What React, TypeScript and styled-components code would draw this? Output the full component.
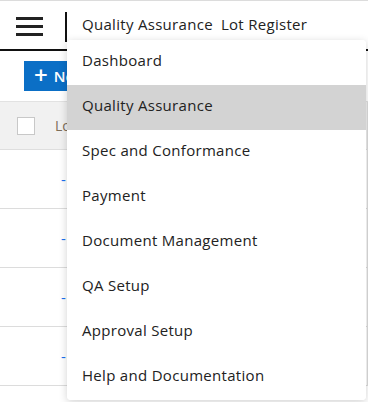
import styled, { createGlobalStyle } from 'styled-components'

const GlobalStyle = createGlobalStyle`
  html, body {
    margin: 0;
    padding: 0;
    background: #fff;
    font-family: 'Open Sans', 'DejaVu Sans', sans-serif;
    color: #222;
  }
`

const MENU_ITEMS = [
  'Dashboard',
  'Quality Assurance',
  'Spec and Conformance',
  'Payment',
  'Document Management',
  'QA Setup',
  'Approval Setup',
  'Help and Documentation',
]

const ROWS = [1, 2, 3, 4]

const App = () => {
  return (
    <Page>
      <GlobalStyle />
      <Header>
        <MenuButton aria-label="menu">
          <Bar />
          <Bar />
          <Bar />
        </MenuButton>
        <Divider />
        <Title>Quality Assurance</Title>
        <Title>Lot Register</Title>
      </Header>
      <Toolbar>
        <NewButton>
          <Plus>+</Plus> New
        </NewButton>
      </Toolbar>
      <Table>
        <HeadRow>
          <CheckCell>
            <Checkbox />
          </CheckCell>
          <LotCell $head>Lot Number</LotCell>
          <RestCell />
          <LastCell />
        </HeadRow>
        {ROWS.map((row) => (
          <BodyRow key={row}>
            <CheckCell />
            <LotCell>
              <DashLink>-</DashLink>
            </LotCell>
            <RestCell />
            <LastCell />
          </BodyRow>
        ))}
      </Table>
      <Dropdown>
        {MENU_ITEMS.map((item) => (
          <MenuItem key={item} $active={item === 'Quality Assurance'}>
            {item}
          </MenuItem>
        ))}
      </Dropdown>
    </Page>
  )
}

const Page = styled.div`
  position: relative;
  width: 368px;
  height: 402px;
  overflow: hidden;
  border-top: 1px solid #dcdcdc;
  box-sizing: border-box;
`

const Header = styled.div`
  display: flex;
  align-items: center;
  height: 48px;
  border-bottom: 2px solid #111;
  box-sizing: content-box;
`

const MenuButton = styled.div`
  display: flex;
  flex-direction: column;
  gap: 5px;
  width: 27px;
  margin: 0 22px 0 16px;
  padding-top: 2px;
`

const Bar = styled.span`
  display: block;
  height: 3px;
  background: #222;
`

const Divider = styled.span`
  width: 2px;
  height: 30px;
  margin-top: 3px;
  background: #111;
  margin-right: 15px;
`

const Title = styled.span`
  font-size: 15px;
  letter-spacing: 0.3px;
  color: #222;
  margin-right: 8px;
  margin-top: -3px;
`

const Toolbar = styled.div`
  display: flex;
  padding: 10px 24px;
`

const NewButton = styled.button`
  display: flex;
  align-items: center;
  gap: 6px;
  height: 30px;
  padding: 0 10px;
  border: none;
  border-radius: 0;
  background: #0b6fc6;
  color: #fff;
  font-family: inherit;
  font-size: 15px;
  font-weight: 600;
`

const Plus = styled.span`
  font-size: 24px;
  font-weight: 600;
  line-height: 1;
  margin-top: -2px;
`

const Table = styled.div`
  display: flex;
  flex-direction: column;
`

const HeadRow = styled.div`
  display: grid;
  grid-template-columns: 50px 1fr 101px 1px;
  height: 49px;
  background: #f1f1f1;
  border-top: 1px solid #e2e2e2;
  border-bottom: 1px solid #dedede;
  box-sizing: border-box;
`

const BodyRow = styled.div`
  display: grid;
  grid-template-columns: 50px 1fr 101px 1px;
  height: 59px;
  border-bottom: 1px solid #dcdcdc;
  box-sizing: border-box;
`

const CheckCell = styled.div`
  display: flex;
  align-items: center;
  padding-left: 17px;
`

const Checkbox = styled.span`
  width: 16px;
  height: 16px;
  border: 1px solid #c8c8c8;
  background: #fff;
`

const LotCell = styled.div<{ $head?: boolean }>`
  display: flex;
  align-items: center;
  padding-left: ${({ $head }) => ($head ? '5px' : '11px')};
  font-size: 14px;
  color: #7d6d58;
  white-space: nowrap;
  overflow: hidden;
`

const DashLink = styled.span`
  color: #1a6ff0;
  font-size: 15px;
`

const RestCell = styled.div`
  border-left: 1px solid #dcdcdc;
`

const LastCell = styled.div`
  background: #dcdcdc;
`

const Dropdown = styled.div`
  position: absolute;
  left: 67px;
  top: 39px;
  width: 299px;
  display: flex;
  flex-direction: column;
  background: #fff;
  border-radius: 4px;
  box-shadow: 0 2px 8px rgba(0, 0, 0, 0.18);
  overflow: hidden;
`

const MenuItem = styled.div<{ $active?: boolean }>`
  display: flex;
  align-items: center;
  box-sizing: border-box;
  height: 45px;
  padding: 0 0 5px 15px;
  font-size: 15px;
  letter-spacing: 0.3px;
  color: #222;
  background: ${({ $active }) => ($active ? '#d3d3d3' : '#fff')};
`

export default App
